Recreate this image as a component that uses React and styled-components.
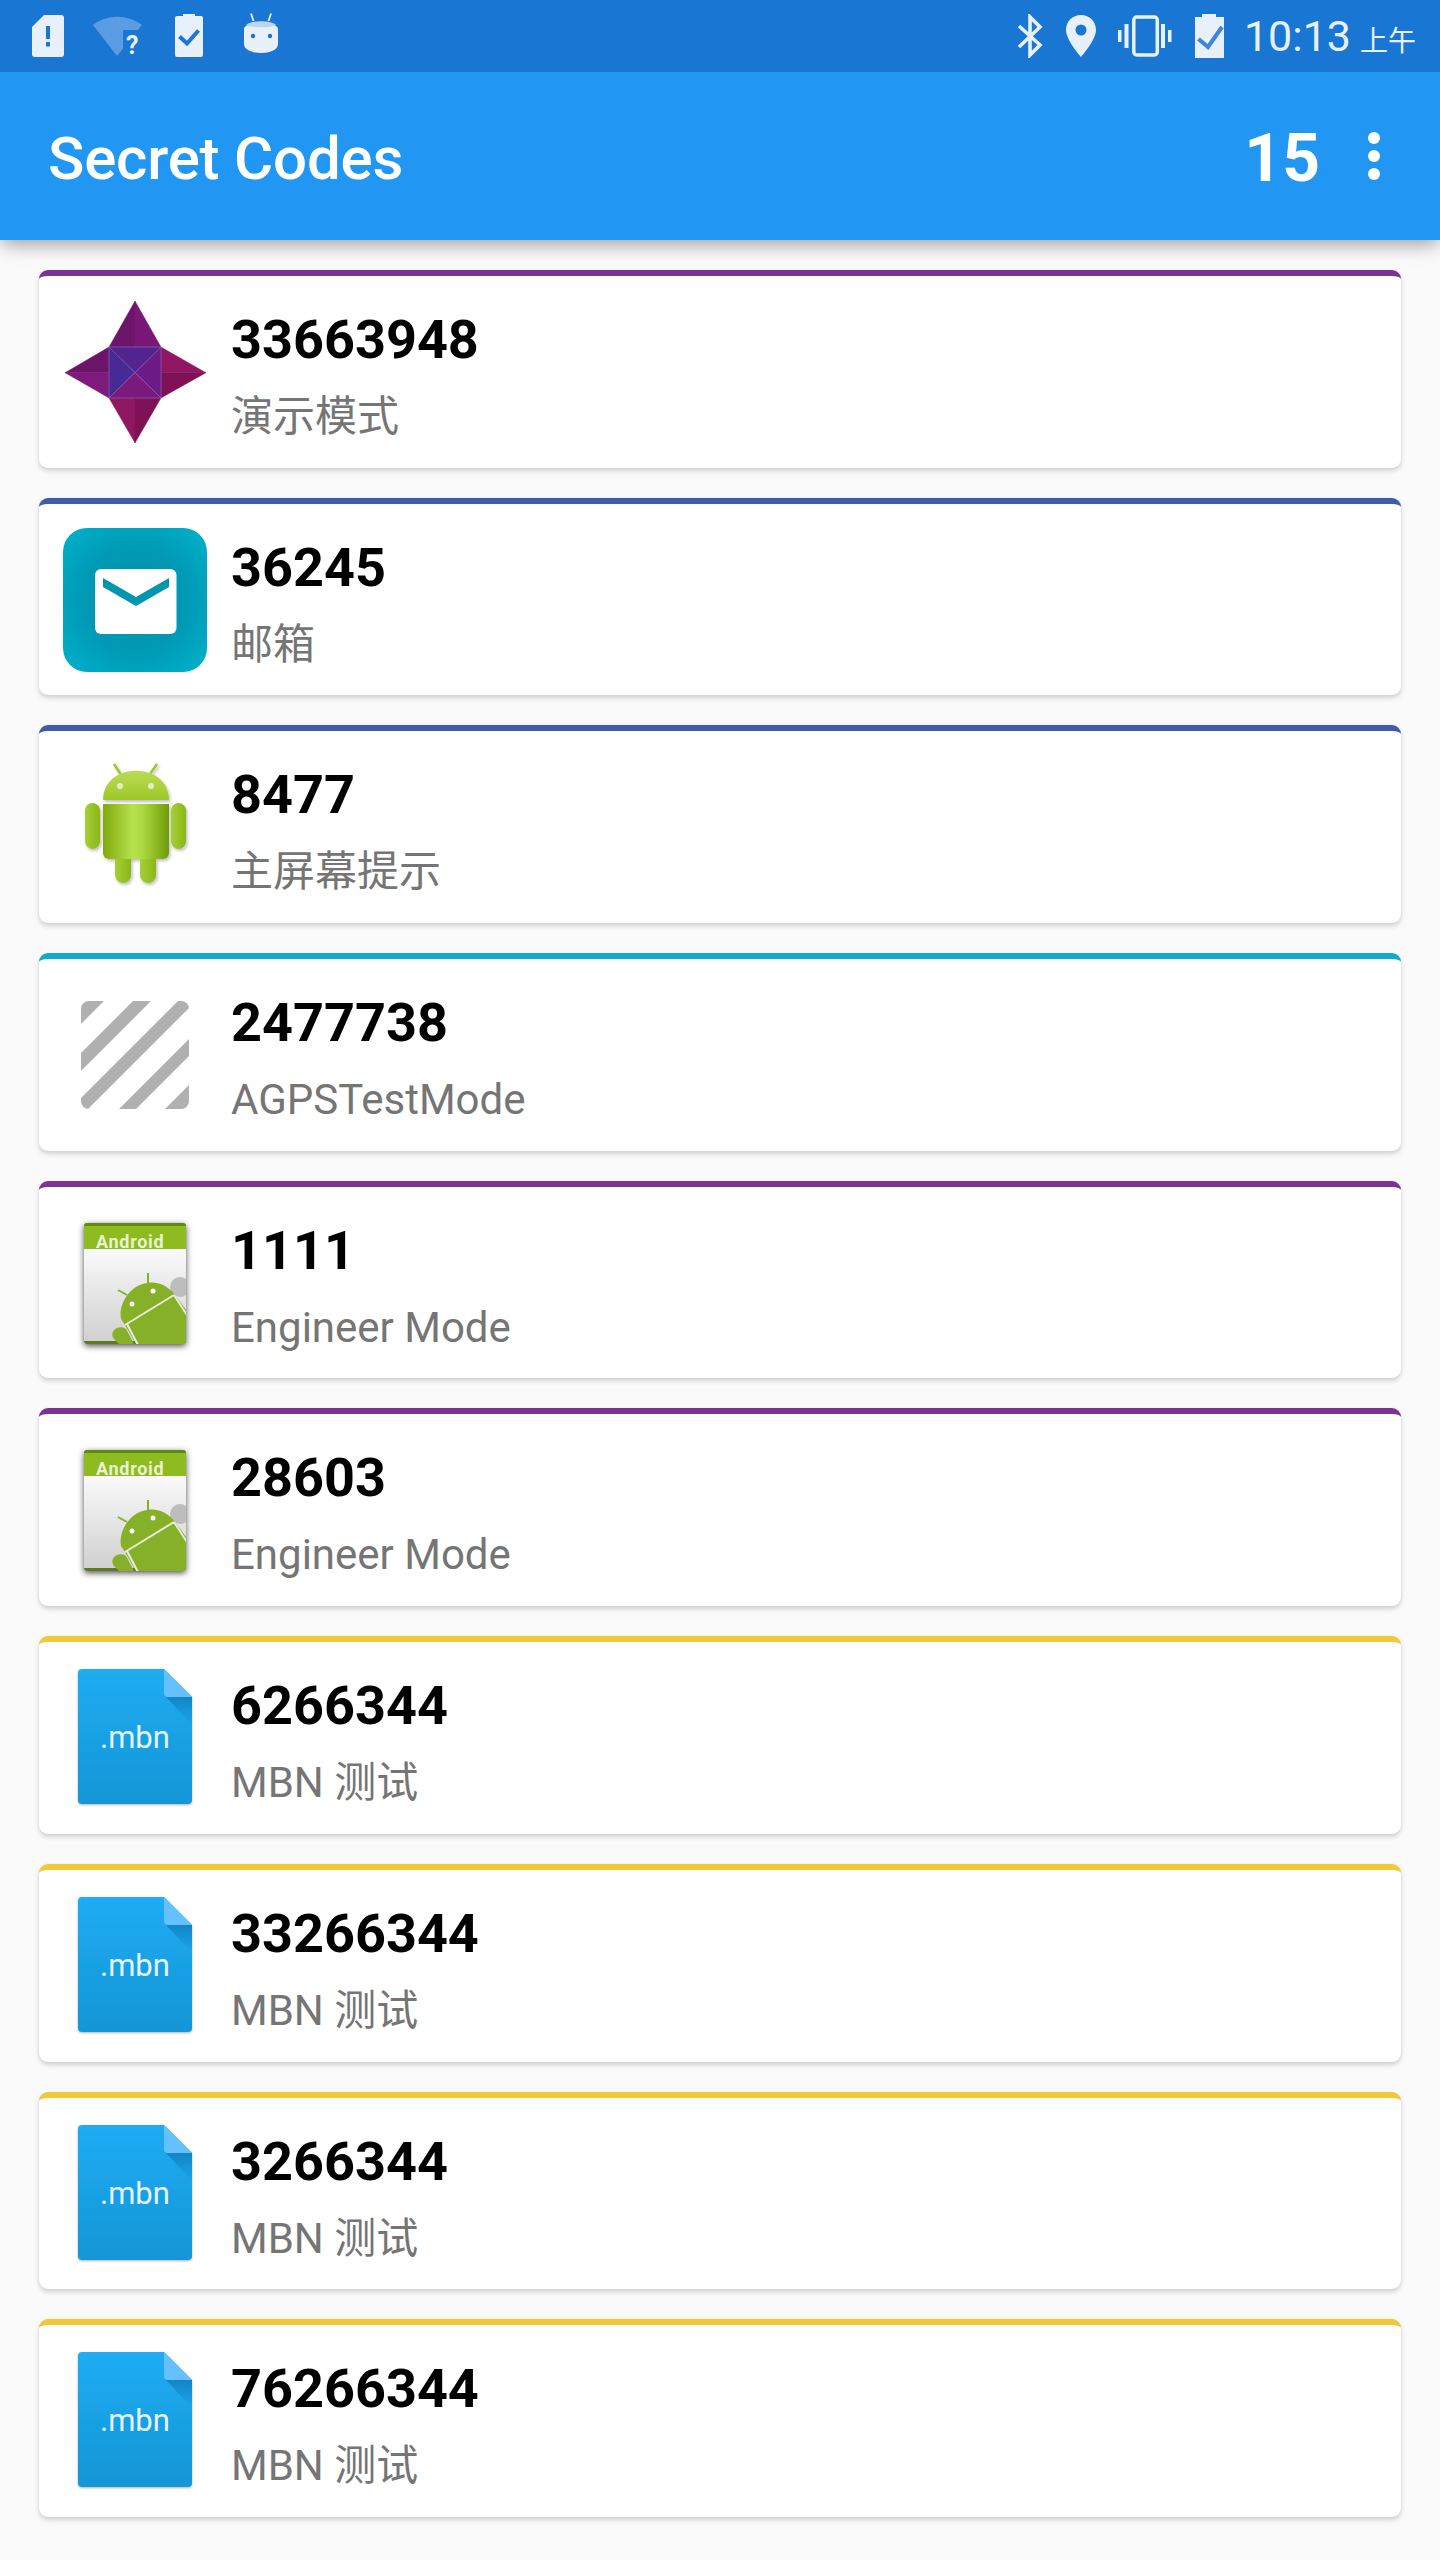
import React from "react";
import styled, { createGlobalStyle } from "styled-components";

const Global = createGlobalStyle`
  html, body { margin: 0; padding: 0; background: #fafafa; }
  * { box-sizing: border-box; }
`;
const FONT = `Roboto, "Noto Sans CJK SC", sans-serif`;

const Page = styled.div`
  width: 1440px; height: 2560px; overflow: hidden;
  display: flex; flex-direction: column; background: #fafafa; font-family: ${FONT};
`;
const StatusBar = styled.div`
  height: 72px; flex: none; background: #1976d2; display: flex; align-items: flex-start;
  padding: 0 24px 0 32px; color: #e8f1fb; position: relative; z-index: 3;
`;
const StatusSpacer = styled.div`flex: 1;`;
const SIcon = styled.svg`
  display: block; flex: none; margin-left: ${p => p.$ml || 0}px; margin-top: ${p => p.$mt || 0}px;
`;
const Clock = styled.div`
  margin-left: 19px; height: 72px; display: flex; align-items: baseline;
  font-size: 43px; line-height: 72px; color: #e8f1fb; white-space: nowrap;
`;
const Meridiem = styled.span`
  font-size: 28px; margin-left: 9px; font-family: "Noto Sans CJK SC", sans-serif;
`;
const Toolbar = styled.header`
  height: 168px; flex: none; background: #2196f3; display: flex; align-items: center;
  padding: 0 12px 0 48px; color: #fff; position: relative; z-index: 2;
  box-shadow: 0 6px 16px -2px rgba(0,0,0,.3), 0 4px 24px rgba(0,0,0,.1);
`;
const Title = styled.h1`
  margin: 5px 0 0; flex: 1; font-size: 60px; font-weight: 500; line-height: 72px; letter-spacing: -0.2px;
`;
const Count = styled.div`
  font-size: 66px; font-weight: 700; line-height: 72px; margin-top: 6px;
`;
const More = styled.div`
  width: 108px; display: flex; flex-direction: column; align-items: center; gap: 6px;
`;
const Dot = styled.span`width: 12px; height: 12px; border-radius: 50%; background: #fff;`;
const List = styled.main`
  flex: 1; display: flex; flex-direction: column; gap: 30px; padding: 30px 39px 0;
`;
const Card = styled.article`
  height: 197.7px; flex: none; display: flex; align-items: flex-start; gap: 24px;
  padding: 24px; background: #fff; border-top: 6px solid ${p => p.$accent};
  border-radius: 9px; box-shadow: 0 3px 5px rgba(0,0,0,.16), 0 0 3px rgba(0,0,0,.05);
`;
const IconBox = styled.svg`display: block; flex: none; width: 144px; height: 144px;`;
const Info = styled.div`padding-top: 8px; display: flex; flex-direction: column; gap: 17px;`;
const Code = styled.div`font-size: 54px; font-weight: 700; line-height: 64px; color: #000;`;
const Label = styled.div`font-size: 42px; line-height: 56px; color: #757575;`;

const Sim = () => (
  <SIcon width="32" height="42" viewBox="0 0 32 42" $mt={15}>
    <path d="M12 0H29a3 3 0 0 1 3 3V39a3 3 0 0 1-3 3H3a3 3 0 0 1-3-3V12Z" fill="#e8f1fb" />
    <rect x="14" y="11" width="4" height="13" fill="#1976d2" />
    <rect x="14" y="27" width="4" height="4.500" fill="#1976d2" />
  </SIcon>
);
const WifiQ = () => (
  <SIcon width="54" height="54" viewBox="0 0 54 54" $ml={29} $mt={16}>
    <path d="M0 9C14-2 34-2 49 9L24 40Z" fill="#5c9ce2" />
    <path d="M30 14H50V40H30Z" fill="#1976d2" />
    <text x="33" y="38" fontFamily="Roboto, sans-serif" fontWeight="700" fontSize="25" fill="#e8f1fb">?</text>
  </SIcon>
);
const BatCheck = () => (
  <SIcon width="28" height="43" viewBox="0 0 28 43" $ml={28} $mt={14}>
    <path d="M8 0H20V2H26a2 2 0 0 1 2 2V41a2 2 0 0 1-2 2H2a2 2 0 0 1-2-2V4a2 2 0 0 1 2-2H8Z" fill="#e8f1fb" />
    <path d="M4.500 22.500L12 29.500L23.500 16.500" fill="none" stroke="#1976d2" strokeWidth="4" />
  </SIcon>
);
const Bot = () => (
  <SIcon width="36" height="42" viewBox="0 0 36 42" $ml={40} $mt={12}>
    <path d="M8 1.500L10.500 9M28 1.500L25.500 9" stroke="#e8f1fb" strokeWidth="1.800" />
    <path d="M1 17C1 9 35 9 35 17V32C35 44 1 44 1 32Z" fill="#e8f1fb" />
    <path d="M3 13C8 8 28 8 33 13C30 16 6 16 3 13Z" fill="#bcd6f2" />
    <circle cx="10" cy="24" r="2.200" fill="#1976d2" />
    <circle cx="27" cy="24" r="2.200" fill="#1976d2" />
  </SIcon>
);
const Bt = () => (
  <SIcon width="28" height="44" viewBox="0 0 28 44" $mt={14}>
    <path d="M3 12L24 31L14 41V3L24 13L3 33" fill="none" stroke="#e8f1fb" strokeWidth="3.600" />
  </SIcon>
);
const Pin = () => (
  <SIcon width="32" height="44" viewBox="0 0 32 44" $ml={21} $mt={14}>
    <path fillRule="evenodd" d="M16 1C7.500 1 1 7.500 1 16C1 26 16 43 16 43S31 26 31 16C31 7.500 24.500 1 16 1ZM16 10.500a5.500 5.500 0 1 1 0 11a5.500 5.500 0 0 1 0-11Z" fill="#e8f1fb" />
  </SIcon>
);
const Vibrate = () => (
  <SIcon width="54" height="42" viewBox="0 0 54 42" $ml={21} $mt={15}>
    <rect x="15.800" y="2" width="23.500" height="38" rx="3" fill="none" stroke="#e8f1fb" strokeWidth="3.500" />
    <rect x="0" y="15" width="3.500" height="12" fill="#e8f1fb" />
    <rect x="6.500" y="9" width="4" height="24" fill="#e8f1fb" />
    <rect x="43" y="9" width="4" height="24" fill="#e8f1fb" />
    <rect x="50" y="15" width="3.500" height="12" fill="#e8f1fb" />
  </SIcon>
);
const BatFull = () => (
  <SIcon width="30" height="45" viewBox="0 0 30 45" $ml={23} $mt={14}>
    <path d="M7 0H21V3H29V44H0V3H7Z" fill="#e8f1fb" />
    <path d="M3.500 25L13 33L27 13" fill="none" stroke="#3f86d8" strokeWidth="4.200" />
  </SIcon>
);

const facets = [
  ["72 1 46 47 72 72", "#6d1569"], ["72 1 98 47 72 72", "#7a1878"],
  ["2 72.700 46 47 46 72.700", "#6b1469"], ["2 72.700 46 98 46 72.700", "#7d1a7c"],
  ["143 72.700 98 47 98 72.700", "#8f1762"], ["143 72.700 98 98 98 72.700", "#7f1257"],
  ["46 98 72 98 72 143", "#8f1762"], ["72 98 98 98 72 143", "#7f1257"],
  ["46 47 98 47 72 72.500", "#52248f"], ["46 47 46 98 72 72.500", "#472a96"],
  ["98 47 98 98 72 72.500", "#6c1c86"], ["46 98 98 98 72 72.500", "#7a1a7c"],
];
const Star = () => (
  <IconBox viewBox="0 0 144 144">
    {facets.map(([pts, c]) => <polygon key={pts} points={pts} fill={c} stroke={c} strokeWidth=".4" />)}
    <path d="M46 47H98V98H46ZM46 47L98 98M98 47L46 98" fill="none" stroke="#8a62b8" strokeWidth=".7" />
  </IconBox>
);
const Mail = () => (
  <IconBox viewBox="0 0 144 144">
    <defs>
      <radialGradient id="mailbg" cx="50%" cy="50%" r="62%">
        <stop offset="0" stopColor="#0090a8" />
        <stop offset="0.6" stopColor="#009ab6" />
        <stop offset="1" stopColor="#00acc6" />
      </radialGradient>
    </defs>
    <rect width="144" height="144" rx="24" fill="url(#mailbg)" />
    <rect x="32" y="41" width="81.500" height="65" rx="6" fill="#fff" />
    <path d="M40 50L73 69L106 50V59L73 78L40 59Z" fill="#0096ae" />
  </IconBox>
);
const Droid = () => (
  <IconBox viewBox="0 0 144 144">
    <defs>
      <linearGradient id="droidg" x1="0" x2="1" y1="0" y2="0">
        <stop offset="0" stopColor="#82a80e" />
        <stop offset="0.45" stopColor="#b6e24c" />
        <stop offset="0.6" stopColor="#acd840" />
        <stop offset="1" stopColor="#6f9c06" />
      </linearGradient>
      <linearGradient id="droidh" x1="0" x2="0" y1="0" y2="1">
        <stop offset="0" stopColor="#b9dc56" />
        <stop offset="1" stopColor="#9ec82a" />
      </linearGradient>
      <linearGradient id="droida" x1="0" x2="1" y1="0" y2="0">
        <stop offset="0" stopColor="#a6d038" />
        <stop offset="1" stopColor="#8bb616" />
      </linearGradient>
      <filter id="droidsh" x="-10%" y="-10%" width="120%" height="120%">
        <feDropShadow dx="1.500" dy="2" stdDeviation="1.500" floodColor="#000" floodOpacity=".25" />
      </filter>
    </defs>
    <g filter="url(#droidsh)">
      <path d="M51 9L57.500 19M94 9L87 19" stroke="#9cc62c" strokeWidth="2.500" />
      <path d="M40 45C40 6 106 6 106 45Z" fill="url(#droidh)" />
      <circle cx="57" cy="31" r="3" fill="#e3ecd0" />
      <circle cx="88" cy="31" r="3" fill="#e3ecd0" />
      <path d="M52 100H68V120a8 8 0 0 1-16 0Z" fill="url(#droida)" />
      <path d="M77 100H93V120a8 8 0 0 1-16 0Z" fill="url(#droida)" />
      <path d="M40 49H106V98a6 6 0 0 1-6 6H46a6 6 0 0 1-6-6Z" fill="url(#droidg)" />
      <rect x="22" y="48" width="15" height="46" rx="7.500" fill="url(#droida)" />
      <rect x="108" y="48" width="15" height="46" rx="7.500" fill="url(#droida)" />
    </g>
  </IconBox>
);
const Stripes = () => (
  <IconBox viewBox="0 0 144 144">
    <defs>
      <clipPath id="stripeclip"><rect x="18" y="18" width="108" height="108" rx="8" /></clipPath>
    </defs>
    <g clipPath="url(#stripeclip)" fill="#b0b0b0">
      <polygon points="18 18 41 18 18 41" />
      <polygon points="70 18 88 18 18 88 18 70" />
      <polygon points="115 18 133 18 25 126 18 126 18 115" />
      <polygon points="126 56 126 73 73 126 56 126" />
      <polygon points="126 102 126 126 102 126" />
    </g>
  </IconBox>
);
const Engineer = ({ id }) => (
  <IconBox viewBox="0 0 144 144">
    <defs>
      <linearGradient id={`eng${id}`} x1="0" x2="0" y1="0" y2="1">
        <stop offset="0" stopColor="#fafafa" />
        <stop offset="1" stopColor="#cfcfcf" />
      </linearGradient>
      <filter id={`engs${id}`} x="-15%" y="-15%" width="130%" height="130%">
        <feDropShadow dx="0" dy="2" stdDeviation="3" floodColor="#000" floodOpacity=".7" />
      </filter>
      <clipPath id={`engc${id}`}><rect x="21" y="12" width="102" height="121" rx="3" /></clipPath>
    </defs>
    <rect x="21" y="12" width="102" height="121" rx="3" fill="#ddd" filter={`url(#engs${id})`} />
    <g clipPath={`url(#engc${id})`}>
      <rect x="21" y="38" width="102" height="95" fill={`url(#eng${id})`} />
      <rect x="21" y="12" width="102" height="26" fill="#8dbb20" />
      <rect x="21" y="12" width="102" height="3" fill="#5f8a12" />
      <rect x="21" y="130" width="102" height="3" fill="#5d7a22" />
      <text x="33" y="37" fontFamily="Roboto, sans-serif" fontWeight="700" fontSize="18" letterSpacing=".7" fill="#eaf3d0">Android</text>
      <circle cx="117" cy="76" r="10" fill="#bdbdbd" />
      <path d="M58 108C55 92 68 74 84 72C96 70 106 76 112 84L124 100V133H73L62 114Z" fill="#86b028" />
      <path d="M54 117C49 119 48 125 51 128L56 133H71L63 118C60 116 57 116 54 117Z" fill="#86b028" />
      <path d="M62 114L111 84M64 113L75 134M111 84L124 104" fill="none" stroke="#e6eedb" strokeWidth="2" />
      <path d="M85 72V62M64 84L55 79" stroke="#86b028" strokeWidth="2" />
      <circle cx="69" cy="93" r="2.500" fill="#fff" />
      <circle cx="90" cy="80" r="2.500" fill="#fff" />
    </g>
  </IconBox>
);
const Mbn = ({ id }) => (
  <IconBox viewBox="0 0 144 144">
    <defs>
      <linearGradient id={`mbn${id}`} x1="0" x2="0" y1="0" y2="1">
        <stop offset="0" stopColor="#20acf3" />
        <stop offset="1" stopColor="#1296d6" />
      </linearGradient>
      <linearGradient id={`mbnf${id}`} x1="0" x2="0" y1="0" y2="1">
        <stop offset="0" stopColor="#1285c4" />
        <stop offset="1" stopColor="#1ba6ec" />
      </linearGradient>
      <filter id={`mbns${id}`} x="-10%" y="-10%" width="120%" height="120%">
        <feDropShadow dx="0" dy="1" stdDeviation="1" floodColor="#000" floodOpacity=".3" />
      </filter>
    </defs>
    <path d="M19 3H101L129 31V134a4 4 0 0 1-4 4H19a4 4 0 0 1-4-4V7a4 4 0 0 1 4-4Z" fill={`url(#mbn${id})`} filter={`url(#mbns${id})`} />
    <path d="M103 31H129V59Z" fill={`url(#mbnf${id})`} />
    <path d="M101 3L129 31H105a4 4 0 0 1-4-4Z" fill="#64c0ff" />
    <text x="37" y="82" fontFamily="Roboto, sans-serif" fontSize="31" fill="#e4f4fd">.mbn</text>
  </IconBox>
);

const PURPLE = "#7b3294", INDIGO = "#405ca8", CYAN = "#13a9cd", YELLOW = "#f3c838";
const rows = [
  { code: "33663948", label: "演示模式", accent: PURPLE, icon: <Star /> },
  { code: "36245", label: "邮箱", accent: INDIGO, icon: <Mail /> },
  { code: "8477", label: "主屏幕提示", accent: INDIGO, icon: <Droid /> },
  { code: "2477738", label: "AGPSTestMode", accent: CYAN, icon: <Stripes /> },
  { code: "1111", label: "Engineer Mode", accent: PURPLE, icon: <Engineer id="a" /> },
  { code: "28603", label: "Engineer Mode", accent: PURPLE, icon: <Engineer id="b" /> },
  { code: "6266344", label: "MBN 测试", accent: YELLOW, icon: <Mbn id="a" /> },
  { code: "33266344", label: "MBN 测试", accent: YELLOW, icon: <Mbn id="b" /> },
  { code: "3266344", label: "MBN 测试", accent: YELLOW, icon: <Mbn id="c" /> },
  { code: "76266344", label: "MBN 测试", accent: YELLOW, icon: <Mbn id="d" /> },
];

export default function App() {
  return (
    <Page>
      <Global />
      <StatusBar>
        <Sim /><WifiQ /><BatCheck /><Bot />
        <StatusSpacer />
        <Bt /><Pin /><Vibrate /><BatFull />
        <Clock>10:13<Meridiem>上午</Meridiem></Clock>
      </StatusBar>
      <Toolbar>
        <Title>Secret Codes</Title>
        <Count>15</Count>
        <More><Dot /><Dot /><Dot /></More>
      </Toolbar>
      <List>
        {rows.map(r => (
          <Card key={r.code} $accent={r.accent}>
            {r.icon}
            <Info>
              <Code>{r.code}</Code>
              <Label>{r.label}</Label>
            </Info>
          </Card>
        ))}
      </List>
    </Page>
  );
}
